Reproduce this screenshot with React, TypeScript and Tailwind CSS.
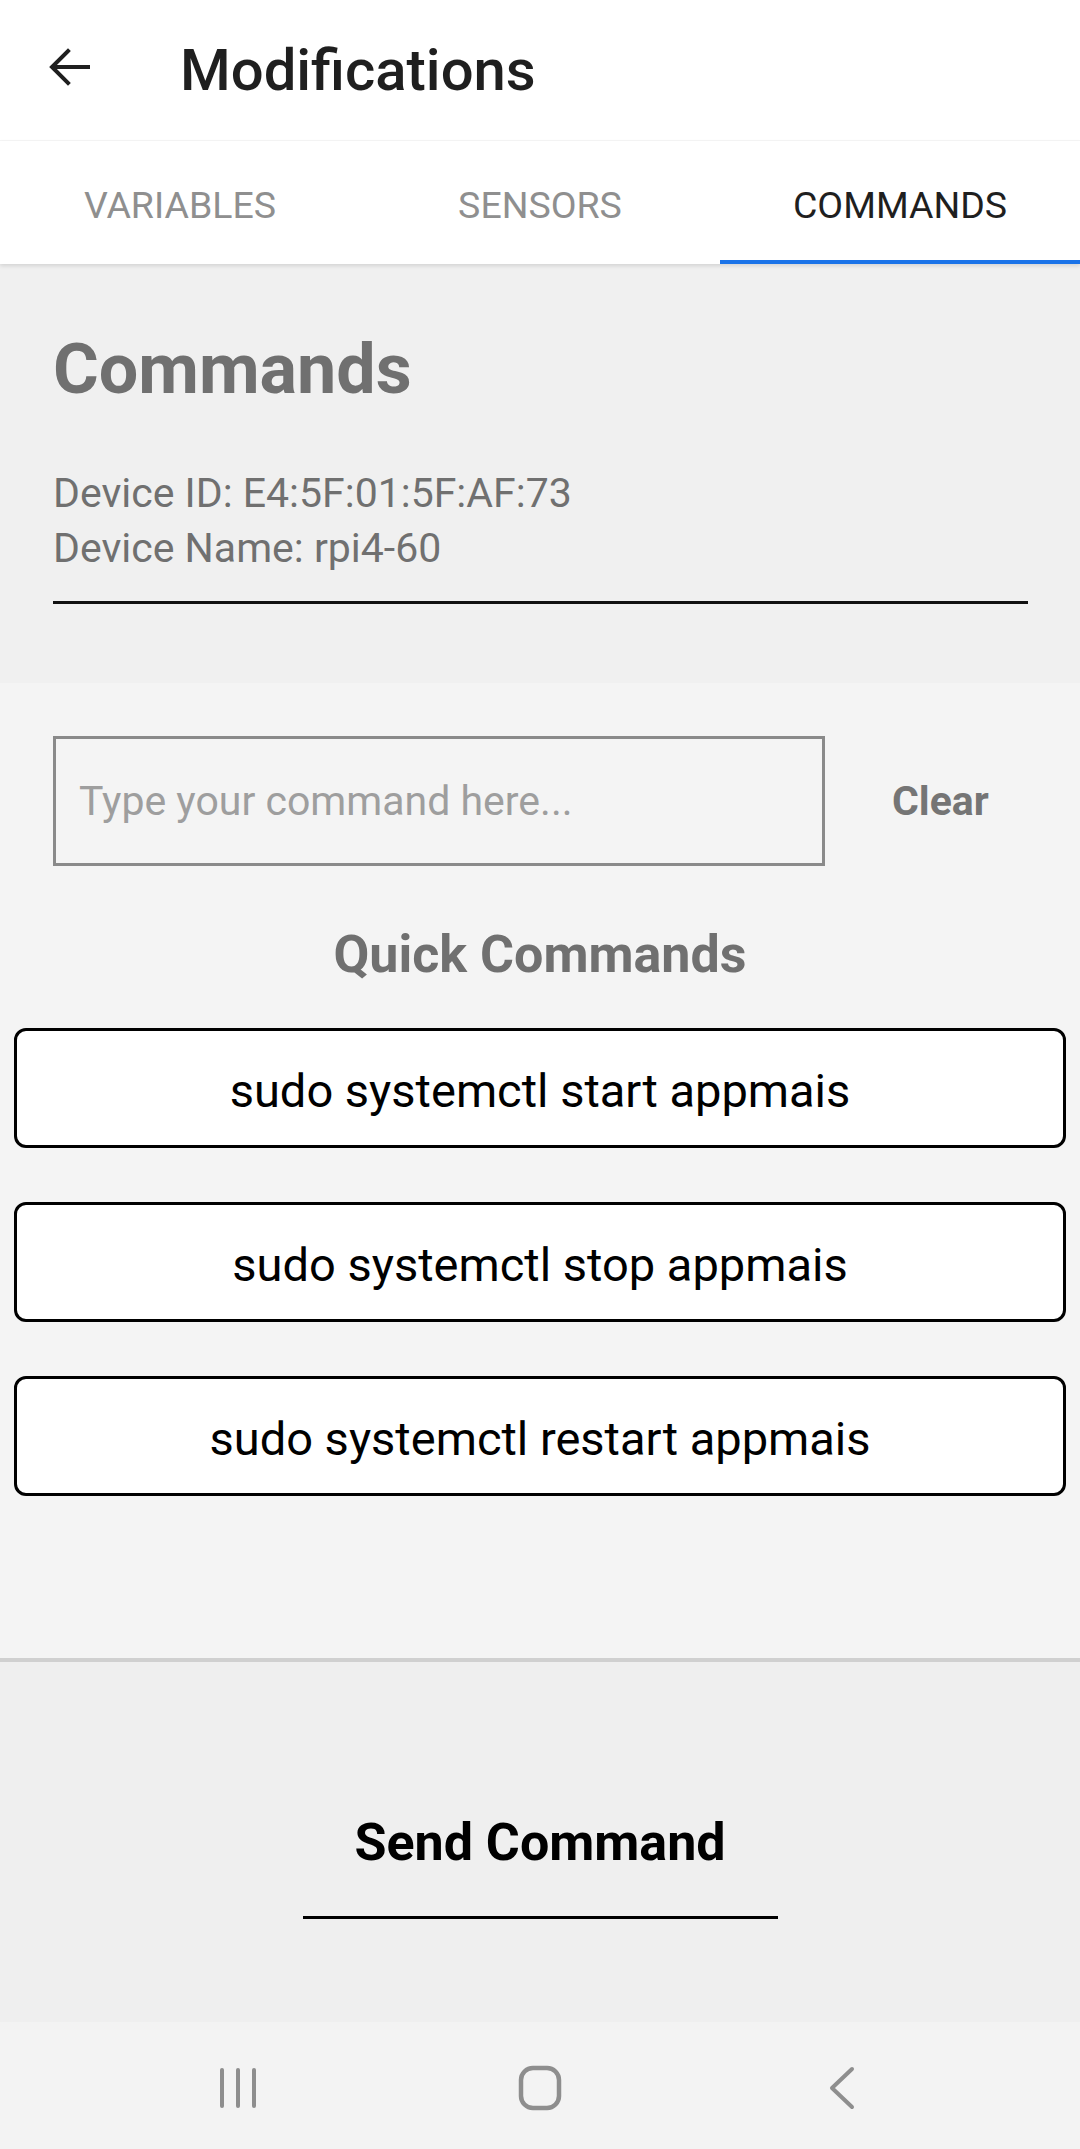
import { useState } from "react";

const quickCommands = [
  "sudo systemctl start appmais",
  "sudo systemctl stop appmais",
  "sudo systemctl restart appmais",
];

const tabs = ["Variables", "Sensors", "Commands"];

export default function App() {
  const [command, setCommand] = useState("");
  const [activeTab, setActiveTab] = useState(2);

  return (
    <div className="w-[1080px] h-[2149px] flex flex-col bg-[#f4f4f4] font-['Roboto','Liberation_Sans',sans-serif] overflow-hidden">
      {/* app bar */}
      <div className="h-[141px] shrink-0 bg-white flex items-center border-b border-[#f6f6f6]">
        <button className="ml-[48px] mb-[6px] w-[42px] h-[40px] flex items-center justify-center">
          <svg width="42" height="40" viewBox="0 0 42 40" fill="none" stroke="#1f1f1f" strokeWidth="4" strokeLinecap="square">
            <path d="M40 20H5" />
            <path d="M20 4L4 20L20 36" />
          </svg>
        </button>
        <h1 className="ml-[90px] text-[58px] leading-none font-medium text-[#1f1f1f]">Modifications</h1>
      </div>

      {/* tabs */}
      <div className="h-[123px] shrink-0 bg-white grid grid-cols-3 relative z-10 shadow-[0_2px_4px_rgba(0,0,0,0.12)]">
        {tabs.map((t, i) => (
          <button
            key={t}
            onClick={() => setActiveTab(i)}
            className={
              i === activeTab
                ? "h-full flex items-center justify-center pt-[10px] border-b-[4px] border-[#1a73e8] text-[#1f1f1f] text-[37.5px] leading-none uppercase"
                : "h-full flex items-center justify-center pt-[10px] border-b-[4px] border-transparent text-[#8f8f8f] text-[37.5px] leading-none uppercase"
            }
          >
            {t}
          </button>
        ))}
      </div>

      {/* device info */}
      <div className="h-[419px] shrink-0 bg-[#f0f0f0] pl-[53px] pr-[52px] pt-[70px]">
        <h2 className="text-[70px] leading-none font-bold text-[#707070]">Commands</h2>
        <div className="mt-[62px] text-[41px] leading-[55px] text-[#707070]">
          <p>Device ID: E4:5F:01:5F:AF:73</p>
          <p>Device Name: rpi4-60</p>
        </div>
        <div className="mt-[25px] h-[3px] bg-[#111]" />
      </div>

      {/* command entry */}
      <div className="h-[975px] shrink-0 bg-[#f4f4f4] pt-[53px]">
        <div className="flex items-center pl-[53px]">
          <input
            value={command}
            onChange={(e) => setCommand(e.target.value)}
            placeholder="Type your command here..."
            className="w-[772px] h-[130px] border-[3px] border-[#8a8a8a] bg-transparent pl-[23px] text-[41px] text-[#333] placeholder:text-[#9e9e9e] outline-none"
          />
          <button onClick={() => setCommand("")} className="ml-[67px] text-[41px] leading-none font-bold text-[#757575]">
            Clear
          </button>
        </div>
        <h3 className="mt-[63px] text-center text-[52px] leading-none font-bold text-[#707070]">Quick Commands</h3>
        <div className="mt-[47px] px-[14px] flex flex-col gap-[54px]">
          {quickCommands.map((c) => (
            <button
              key={c}
              onClick={() => setCommand(c)}
              className="h-[120px] w-full bg-white border-[3px] border-black rounded-[12px] pt-[4px] text-[47px] leading-none text-black"
            >
              {c}
            </button>
          ))}
        </div>
      </div>

      <div className="h-[4px] shrink-0 bg-[#d0d0d0]" />

      {/* send */}
      <div className="h-[360px] shrink-0 bg-[#efefef] pt-[155px] flex flex-col items-center">
        <button className="text-[52px] leading-none font-bold text-black">Send Command</button>
        <div className="mt-[47px] w-[475px] h-[3px] bg-black" />
      </div>

      {/* system nav bar */}
      <div className="flex-1 bg-[#f3f3f3] flex justify-center items-center pt-[4px]">
        <div className="w-[302px] flex justify-center">
          <svg width="40" height="42" viewBox="0 0 40 42" fill="none" stroke="#8e8e8e" strokeWidth="4" strokeLinecap="round">
            <path d="M4 3V39" />
            <path d="M20 3V39" />
            <path d="M36 3V39" />
          </svg>
        </div>
        <div className="w-[302px] flex justify-center">
          <svg width="44" height="46" viewBox="0 0 44 46" fill="none" stroke="#8e8e8e" strokeWidth="4.5">
            <rect x="3" y="3" width="38" height="40" rx="12" />
          </svg>
        </div>
        <div className="w-[302px] flex justify-center">
          <svg width="28" height="44" viewBox="0 0 28 44" fill="none" stroke="#8e8e8e" strokeWidth="4" strokeLinecap="round" strokeLinejoin="round">
            <path d="M24 3L4 22L24 41" />
          </svg>
        </div>
      </div>
    </div>
  );
}
